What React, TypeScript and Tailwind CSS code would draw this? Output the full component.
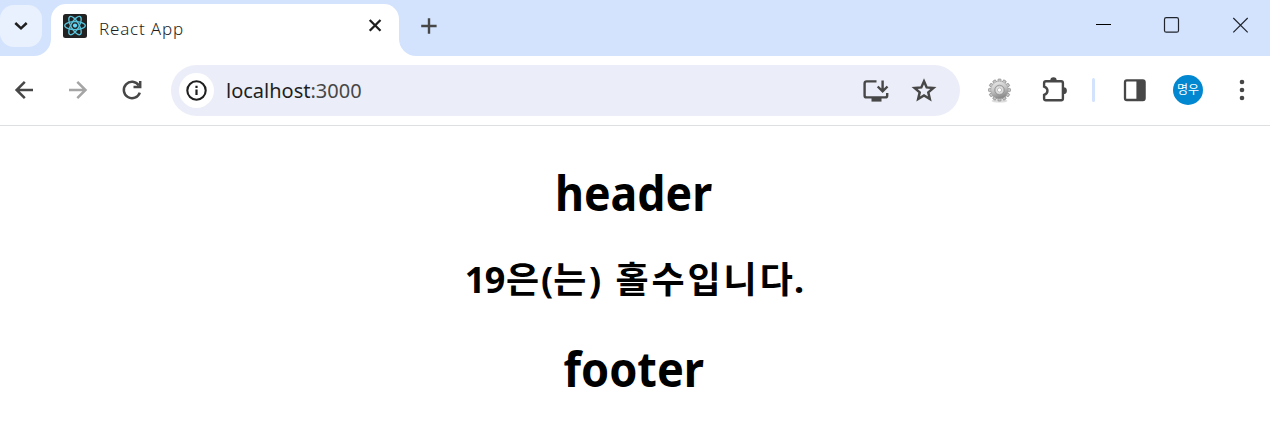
import React from "react";

const dark = "#474747";

function ReactLogo() {
  return (
    <svg width="24" height="24" viewBox="0 0 24 24" className="block shrink-0">
      <rect width="24" height="24" rx="2.5" fill="#222" />
      <g fill="none" stroke="#58c4dc" strokeWidth="1.3">
        <ellipse cx="12" cy="11.6" rx="10.3" ry="4" />
        <ellipse cx="12" cy="11.6" rx="10.3" ry="4" transform="rotate(60 12 11.6)" />
        <ellipse cx="12" cy="11.6" rx="10.3" ry="4" transform="rotate(120 12 11.6)" />
      </g>
      <circle cx="12" cy="11.6" r="2.1" fill="#61dafb" />
    </svg>
  );
}

function TabStrip() {
  return (
    <div className="flex h-14 w-full shrink-0 bg-white">
      <div className="w-[51px] shrink-0 rounded-br-[17px] bg-[#d3e3fd] pt-[5px]">
        <button className="flex h-[42px] w-[42px] items-center justify-center rounded-[14px] bg-[#e9f1fe]">
          <svg width="42" height="42" viewBox="0 0 42 42" fill="none" stroke="#1f1f1f" strokeWidth="2.5">
            <path d="M15.3 18 21 23.4 26.7 18" />
          </svg>
        </button>
      </div>
      <div className="w-[348px] shrink-0 bg-[#d3e3fd] pt-1">
        <div className="flex h-13 rounded-t-[15px] bg-white pl-3">
          <div className="pt-[10px]"><ReactLogo /></div>
          <span className="ml-3 mt-[10px] w-[256px] whitespace-nowrap text-[17px] leading-[30px] font-light tracking-[0.8px] text-[#1f1f1f]">React App</span>
          <svg width="40" height="42" viewBox="0 0 40 42" fill="none" stroke="#1f1f1f" strokeWidth="2.3">
            <path d="m14.7 16 10.8 10.8M25.5 16 14.7 26.8" />
          </svg>
        </div>
      </div>
      <div className="flex flex-1 rounded-bl-[17px] bg-[#d3e3fd]">
        <svg width="60" height="52" viewBox="0 0 60 52" fill="none" stroke={dark} strokeWidth="2.4">
          <path d="M22.2 26H37.6M30 18.3V33.7" />
        </svg>
        <div className="ml-auto flex">
          <svg width="68" height="50" viewBox="0 0 68 50" fill="none" stroke="#000">
            <path d="M27 24.5H42" />
          </svg>
          <svg width="68" height="50" viewBox="0 0 68 50" fill="none" stroke="#20242c" strokeWidth="1.2">
            <rect x="27.5" y="17.7" width="14" height="14.5" rx="1.8" />
          </svg>
          <svg width="65" height="50" viewBox="0 0 65 50" fill="none" stroke="#20242c" strokeWidth="1.2">
            <path d="m28.3 18 14.4 14.4M42.7 18 28.3 32.4" />
          </svg>
        </div>
      </div>
    </div>
  );
}

function Gear() {
  const teeth = Array.from({ length: 12 }, (_, i) => i * 30);
  return (
    <svg width="26" height="28" viewBox="0 0 26 28" className="block">
      <defs>
        <linearGradient id="metal" x1="0" y1="0" x2="0.3" y2="1">
          <stop offset="0" stopColor="#efefef" />
          <stop offset="0.5" stopColor="#c8c8c8" />
          <stop offset="1" stopColor="#8c8c8c" />
        </linearGradient>
      </defs>
      <ellipse cx="13.5" cy="24" rx="8" ry="1.6" fill="#dcdcdc" />
      {teeth.map((a) => (
        <rect key={a} x="11.9" y="2" width="3.2" height="4" rx="0.8" fill="#c4c4c4" stroke="#7c7c7c" strokeWidth="0.6" transform={`rotate(${a} 13.5 13)`} />
      ))}
      <circle cx="13.5" cy="13" r="8.7" fill="url(#metal)" stroke="#999" strokeWidth="0.4" />
      <circle cx="13.5" cy="13" r="4.8" fill="#c4c4c4" stroke="#8a8a8a" strokeWidth="0.7" />
      <circle cx="13.5" cy="13" r="3.4" fill="#e4e4e4" />
      <circle cx="13.5" cy="13" r="2.1" fill="#fff" stroke="#999" strokeWidth="0.6" />
    </svg>
  );
}

function AddressBar() {
  return (
    <div className="flex h-[51px] w-[789px] shrink-0 items-center rounded-full bg-[#ebeef8] pl-2">
      <div className="h-[35px] w-[35px] shrink-0 rounded-full bg-white">
        <svg width="35" height="35" viewBox="0 0 35 35">
          <circle cx="17.5" cy="17.5" r="9.2" fill="none" stroke="#1f1f1f" strokeWidth="2.1" />
          <path d="M16.4 16.4h2.2v5.6h-2.2zM16.4 12.8h2.2v2.2h-2.2z" fill="#1f1f1f" />
        </svg>
      </div>
      <span className="ml-[12px] whitespace-nowrap text-[20px] leading-[30px] text-[#1f1f1f]">
        localhost<span className="text-[#474747]">:3000</span>
      </span>
      <div className="mr-[22px] ml-auto flex gap-5">
        <svg width="28" height="28" viewBox="0 0 28 28" fill="none" stroke={dark} strokeWidth="2.4">
          <path d="M14.5 4.4H4.6Q2.6 4.4 2.6 6.4V18.4Q2.6 20.4 4.6 20.4H23.2Q25.2 20.4 25.2 18.4V16" />
          <path d="M20.6 3.5V14M15.7 9.5 20.6 14.4 25.5 9.5" />
          <path d="M9.5 20.4h10v4.2h-10z" fill={dark} stroke="none" />
        </svg>
        <svg width="28" height="28" viewBox="0 0 28 28" fill="none" stroke={dark} strokeWidth="2.5">
          <path d="M14 4.3 16.7 10.4 23.4 11 18.3 15.4 19.8 22 14 18.5 8.2 22 9.7 15.4 4.6 11 11.3 10.4Z" />
        </svg>
      </div>
    </div>
  );
}

function Toolbar() {
  return (
    <div className="flex h-[70px] shrink-0 items-center border-b border-[#dedfe1] bg-white">
      <div className="flex w-[171px] shrink-0 pb-px">
        <svg width="50" height="40" viewBox="0 0 50 40" fill="none" stroke={dark} strokeWidth="2.5">
          <path d="M33 20H16.8M24.8 11.8 16.6 20 24.8 28.2" />
        </svg>
        <svg width="54" height="40" viewBox="0 0 54 40" fill="none" stroke="#a5a5a5" strokeWidth="2.5">
          <path d="M19 20H35.3M27.3 11.8 35.5 20 27.3 28.2" />
        </svg>
        <svg width="54" height="40" viewBox="0 0 54 40" fill="none" stroke={dark} strokeWidth="2.5">
          <path d="M34.8 15.4A8.2 8.2 0 1 0 35.8 22.6M36.2 11V17.1H29.5" />
        </svg>
      </div>
      <AddressBar />
      <div className="flex flex-1 items-center pb-px">
        <div className="ml-[26px] mt-[2px]"><Gear /></div>
        <svg className="ml-[27px]" width="30" height="30" viewBox="0 0 30 30">
          <path d="M6 6.6H21.2Q22.9 6.6 22.9 8.3V24Q22.9 25.7 21.2 25.7H5.8Q4.1 25.7 4.1 24V20.2C8.6 18.8 8.6 13.4 4.1 12V8.3Q4.1 6.6 6 6.6Z" transform="translate(1 -.4)" fill="none" stroke={dark} strokeWidth="2.4" />
          <path d="M11.3 5.4a3.2 3.2 0 0 1 6.4 0zM24.5 12.3a3.4 3.4 0 0 1 0 6.8z" fill={dark} />
        </svg>
        <div className="ml-[23px] h-6 w-[3px] rounded-full bg-[#d3e3fd]" />
        <svg className="ml-[26px]" width="28" height="28" viewBox="0 0 28 28">
          <rect x="4" y="4.4" width="19.6" height="19.6" rx="1.8" fill="none" stroke={dark} strokeWidth="2.3" />
          <path d="M15.4 4h8v20.5h-8z" fill={dark} />
        </svg>
        <div className="ml-[24px] flex h-[30px] w-[30px] items-center justify-center rounded-full bg-[#0288d1] text-[12px] leading-none text-white">명우</div>
        <svg className="ml-[25px]" width="28" height="28" viewBox="0 0 28 28" fill={dark}>
          <circle cx="14" cy="6" r="2.3" /><circle cx="14" cy="14" r="2.3" /><circle cx="14" cy="22" r="2.3" />
        </svg>
      </div>
    </div>
  );
}

export default function App() {
  return (
    <div className="flex h-[435px] w-[1270px] flex-col overflow-hidden bg-white font-['Noto_Sans','Noto_Sans_CJK_KR',sans-serif]">
      <TabStrip />
      <Toolbar />
      <main className="flex flex-col items-center pt-[35px] pr-[3px] text-center font-bold text-black">
        <h1 className="h-[64px] scale-x-[0.93] text-[48px] leading-[64px]">header</h1>
        <h2 className="mt-[31px] ml-[3px] flex h-[48px] text-[36px] leading-[48px] whitespace-pre">
          <span className="tracking-[-0.5px]">19</span>
          <span className="ml-px tracking-[2px]">은</span>
          <span>(</span>
          <span className="tracking-[2.7px]">는</span>
          <span>)</span>
          <span className="ml-[2px] tracking-[2.9px]"> 홀수입니</span>
          <span className="tracking-[1.2px]">다.</span>
        </h2>
        <h1 className="mt-[33px] h-[64px] scale-x-[0.94] text-[48px] leading-[64px]">footer</h1>
      </main>
    </div>
  );
}
